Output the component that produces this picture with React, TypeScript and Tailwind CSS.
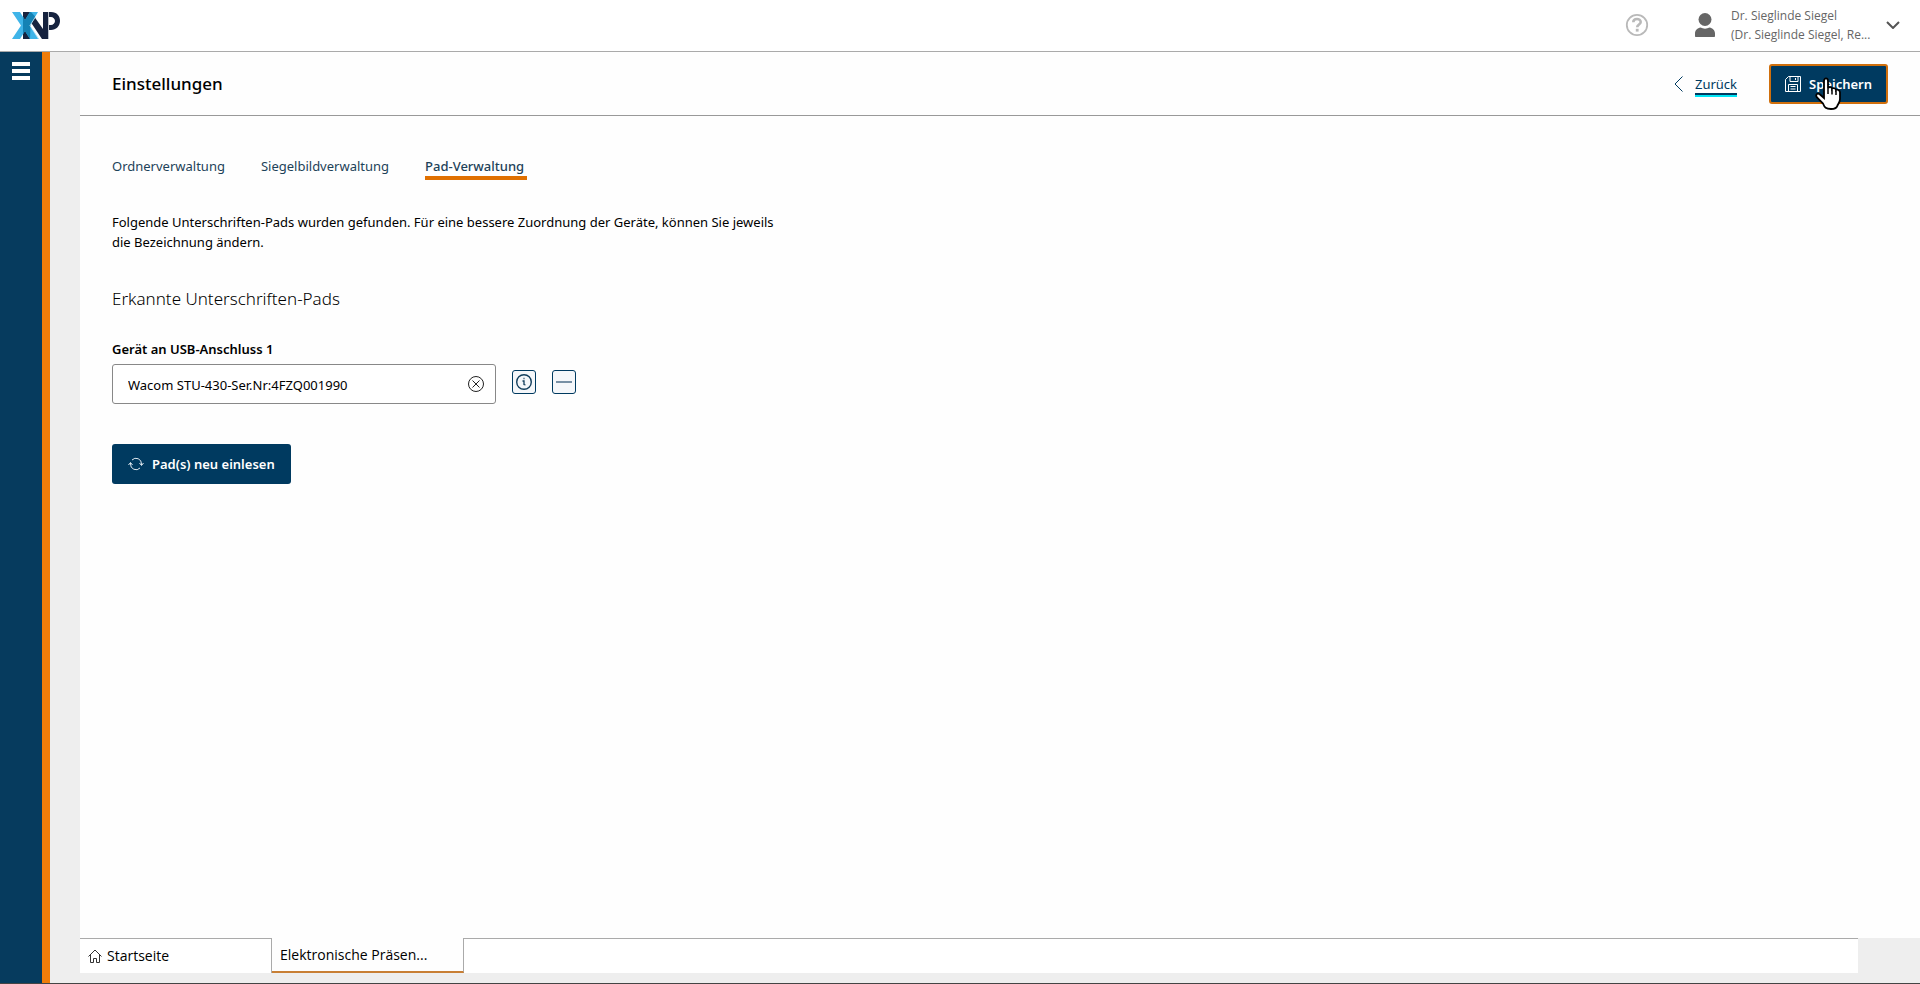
import { useState } from 'react'

const pad_tabs = ['Ordnerverwaltung', 'Siegelbildverwaltung', 'Pad-Verwaltung']

function Logo() {
  return (
    <svg width="48" height="28" viewBox="0 0 48 28" role="img" aria-label="XNP">
      <path d="M11 0h8l12 17V0h5v27h-6L18 9v18h-7z" fill="#16233f" />
      <path d="M37 0h2c6 0 9 4 9 9s-4 9-9 9h-2v-5h2c2 0 4-2 4-4s-2-4-4-4h-2z" fill="#16233f" />
      <path d="M0 0h8l5 8 5-8h8l-8 13.5L27 27h-9l-5-8-5 8H0l9-13.500z" fill="#3fb4e8" />
      <path d="M11 4.800L13 8l5-8h1l4.500 5-5 8.500-.5 13.500-5-8-2 3z" fill="#1482b4" />
      <path d="M24 4l-6 9.500L26.500 27" fill="none" stroke="#e8f4fa" strokeWidth=".7" />
      <path d="M36.500 0v27" stroke="#9aa3b2" strokeWidth=".7" />
    </svg>
  )
}

function HelpIcon() {
  return (
    <svg width="24" height="24" viewBox="0 0 24 24" fill="none" stroke="#b9b9b9">
      <circle cx="12" cy="12" r="10.200" strokeWidth="1.800" />
      <path d="M8.300 9.300c0-4.300 7.400-4.300 7.400-.3 0 2.500-3.500 2.500-3.500 5.200" strokeWidth="2.600" />
      <path d="M10.800 15.800h2.800v2.800h-2.800z" fill="#b9b9b9" stroke="none" />
    </svg>
  )
}

function UserIcon() {
  return (
    <svg width="20" height="24" viewBox="0 0 20 24" fill="#666">
      <circle cx="10" cy="6.500" r="6.500" />
      <path d="M1 24c-.6 0-1-.4-1-1v-2.500C0 17 2.500 15 5.500 14.500c2.500 1.500 6.500 1.500 9 0C17.500 15 20 17 20 20.500V23c0 .6-.4 1-1 1z" />
    </svg>
  )
}

function SaveIcon() {
  return (
    <svg width="16" height="16" viewBox="0 0 16 16" fill="none" stroke="white">
      <path d="M3.500.5h12v15H.5v-12z" />
      <path d="M5 .5v5h8v-5M10.500 2v2M3.500 15.500v-7h9v7M5.500 10.500h5M5.500 13h5" />
    </svg>
  )
}

function HandCursor() {
  return (
    <svg width="26" height="33" viewBox="0 0 26 33" className="pointer-events-none absolute top-[11px] left-11">
      <path
        d="M9 4c0-3.500 4-3.500 4 0v7c.8-1.500 4-1.200 4 .8 1-1.300 4-.6 4 1.400 1-1 4-.3 4 2.300V22c0 3-1.500 4.500-2.500 6.500-.5 2-2 3.500-6.500 3.500-5 0-6.500-1.500-8-5.500L2 20.500C0 17.500 2.500 15.500 5 17.500l4 3.500z"
        fill="white"
        stroke="black"
        strokeWidth="1.800"
      />
      <path d="M13 11v6M17 12.500v5M21 14v4" stroke="black" strokeWidth="1.500" />
    </svg>
  )
}

export default function App() {
  const [active_tab, set_active_tab] = useState('Pad-Verwaltung')
  const [pad_name, set_pad_name] = useState('Wacom STU-430-Ser.Nr:4FZQ001990')

  return (
    <div className="flex h-screen flex-col border-b border-[#444] bg-[#eee] font-['Noto_Sans',sans-serif] text-[13px] leading-5 text-black">
      <header className="flex h-13 shrink-0 items-center justify-between border-b border-[#aaa] bg-white pr-5 pl-3">
        <Logo />
        <div className="flex items-center pb-0.5 font-['Open_Sans',sans-serif] text-xs text-[#666]">
          <button aria-label="Hilfe" className="mr-[46px]"><HelpIcon /></button>
          <UserIcon />
          <button className="ml-4 flex items-center gap-[15px] text-left">
            <span className="w-[140px] leading-[19px]">
              Dr. Sieglinde Siegel
              <br />
              (Dr. Sieglinde Siegel, Re...
            </span>
            <svg width="14" height="8" viewBox="0 0 14 8" fill="none" stroke="#555" strokeWidth="2">
              <path d="M1 1l6 6 6-6" />
            </svg>
          </button>
        </div>
      </header>

      <div className="flex min-h-0 flex-1">
        <nav className="w-[50px] shrink-0 border-r-8 border-[#f07d0a] bg-[#063b5e] pt-[10px] pl-3">
          <button aria-label="Menü" className="flex flex-col gap-[3px]">
            <span className="h-1 w-[18px] bg-white" />
            <span className="h-1 w-[18px] bg-white" />
            <span className="h-1 w-[18px] bg-white" />
          </button>
        </nav>

        <div className="ml-[30px] flex min-w-0 flex-1 flex-col">
          <main className="flex-1 bg-[#fefefe]">
            <div className="flex h-16 items-center justify-between border-b border-[#999] px-8">
              <h1 className="text-[17px] font-medium">Einstellungen</h1>
              <div className="flex items-center">
                <a href="#" className="flex items-center gap-3 text-[#003a60]">
                  <svg width="9" height="16" viewBox="0 0 9 16" fill="none" stroke="#003a60">
                    <path d="M8.500.5L1 8l7.500 7.500" />
                  </svg>
                  <span className="mt-1 border-b-2 border-[#00e5f5]">
                    <span className="block border-b-2 border-[#003a60] leading-[18px]">Zurück</span>
                  </span>
                </a>
                <button className="relative ml-8 flex h-10 items-center gap-2 rounded-[3px] border-2 border-[#d06f0c] bg-[#003a60] px-[14px] font-semibold text-white">
                  <SaveIcon />
                  Speichern
                  <HandCursor />
                </button>
              </div>
            </div>

            <div className="px-8 pt-10">
              <div className="flex gap-9" role="tablist">
                {pad_tabs.map(tab => (
                  <button
                    key={tab}
                    role="tab"
                    aria-selected={tab === active_tab}
                    onClick={() => set_active_tab(tab)}
                    className={`border-b-4 text-[#1d4259] ${tab === active_tab ? 'border-[#e07000] pr-[3px] font-medium' : 'border-transparent'}`}
                  >
                    {tab}
                  </button>
                ))}
              </div>

              <p className="mt-8 max-w-[680px]">
                Folgende Unterschriften-Pads wurden gefunden. Für eine bessere Zuordnung der Geräte, können Sie jeweils die Bezeichnung ändern.
              </p>

              <h2 className="mt-[35px] text-[17px] leading-6 font-light">Erkannte Unterschriften-Pads</h2>

              <label htmlFor="pad" className="mt-7 block font-semibold">Gerät an USB-Anschluss 1</label>
              <div className="mt-[5px] flex items-start">
                <div className="flex h-10 w-96 items-center rounded-[3px] border border-[#888] bg-white pr-[11px] pl-[15px]">
                  <input
                    id="pad"
                    value={pad_name}
                    onChange={e => set_pad_name(e.target.value)}
                    className="min-w-0 flex-1 pt-0.5 outline-none"
                  />
                  <button aria-label="Leeren" onClick={() => set_pad_name('')}>
                    <svg width="16" height="16" viewBox="0 0 16 16" fill="none" stroke="#222">
                      <circle cx="8" cy="8" r="7.500" />
                      <path d="M4.500 4.500l7 7M11.500 4.500l-7 7" />
                    </svg>
                  </button>
                </div>
                <button aria-label="Information" className="mt-[6px] ml-4 flex size-6 items-center justify-center rounded-[3px] border border-[#003a60] bg-[#f5f7fa]">
                  <svg width="16" height="16" viewBox="0 0 16 16" fill="none" stroke="#123e5c">
                    <circle cx="8" cy="8" r="7.300" strokeWidth="1.400" />
                    <path d="M6.500 7H8v3.500l1.500.5M7.500 4.500h1" strokeWidth="1.300" />
                  </svg>
                </button>
                <button aria-label="Entfernen" className="mt-[6px] ml-4 flex size-6 items-center justify-center rounded-[3px] border border-[#003a60] bg-[#f5f7fa]">
                  <span className="h-0.5 w-4 bg-[#7890a5]" />
                </button>
              </div>

              <button className="mt-10 flex h-10 items-center gap-2 rounded-[3px] bg-[#003a60] px-4 font-semibold text-white">
                <svg width="16" height="16" viewBox="0 0 16 16" fill="none" stroke="#dfe8ef">
                  <path d="M13.500 9V8A5.500 5.500 0 0 0 4 4M2.500 7v1A5.500 5.500 0 0 0 12 12" />
                  <path d="M.5 9l2-2.500 2 2.500M11.500 7l2 2.500 2-2.500" />
                </svg>
                Pad(s) neu einlesen
              </button>
            </div>
          </main>

          <footer className="mb-[10px] flex h-[35px] shrink-0 pr-[62px] font-['Open_Sans',sans-serif] text-sm">
            <button className="flex w-48 items-center gap-[5px] border-t border-r border-[#aaa] bg-white pl-2">
              <svg width="14" height="14" viewBox="0 0 14 14" fill="none" stroke="#333">
                <path d="M.5 7.500L7 1l6.500 6.500M2.500 6v7.500h3v-4h3v4h3V6" />
              </svg>
              Startseite
            </button>
            <button className="w-48 border-r border-b-2 border-r-[#aaa] border-b-[#c87f35] bg-[#fefefe] pl-2 text-left">Elektronische Präsen...</button>
            <div className="flex-1 border-t border-[#aaa] bg-white" />
          </footer>
        </div>
      </div>
    </div>
  )
}
